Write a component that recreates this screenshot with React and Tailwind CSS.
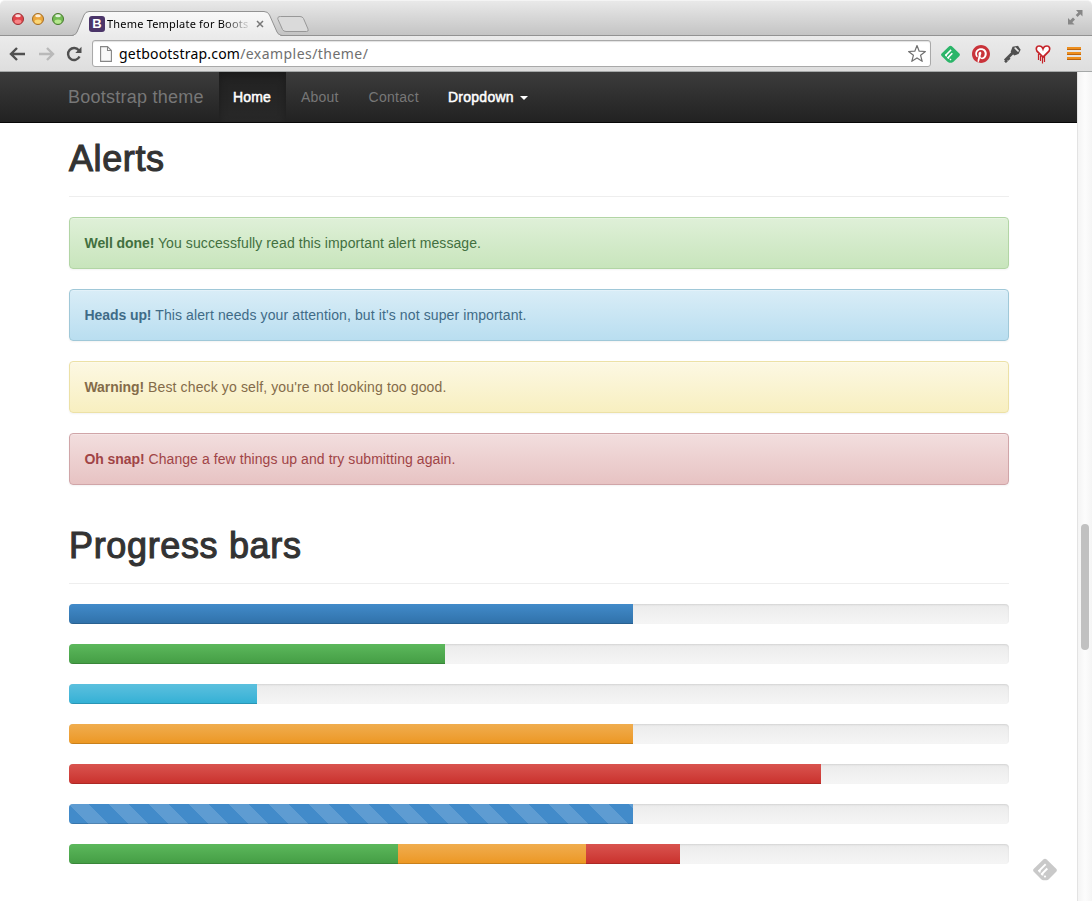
import React from "react";

const alerts = [
  { lead: "Well done!", text: "You successfully read this important alert message.", box: "from-[#dff0d8] to-[#c8e5bc] border-[#b2d5a5] text-[#42703f]", track: "tracking-[0.09px]" },
  { lead: "Heads up!", text: "This alert needs your attention, but it's not super important.", box: "from-[#d9edf7] to-[#b9def0] border-[#a0c8d8] text-[#3f6b87]", track: "tracking-[0.11px]" },
  { lead: "Warning!", text: "Best check yo self, you're not looking too good.", box: "from-[#fcf8e3] to-[#f8efc0] border-[#ece1a6] text-[#846b49]", track: "tracking-[0.13px]" },
  { lead: "Oh snap!", text: "Change a few things up and try submitting again.", box: "from-[#f2dede] to-[#e7c3c3] border-[#d0a5a8] text-[#a04446]", track: "tracking-[0.07px]" },
];

const blue = "bg-linear-to-b from-[#428bca] to-[#3071a9]";
const green = "bg-linear-to-b from-[#5cb85c] to-[#449d44]";
const cyan = "bg-linear-to-b from-[#5bc0de] to-[#31b0d5]";
const orange = "bg-linear-to-b from-[#f0ad4e] to-[#ec971f]";
const red = "bg-linear-to-b from-[#d9534f] to-[#c9302c]";
const striped =
  "bg-[#428bca] bg-[linear-gradient(45deg,rgba(255,255,255,.15)_25%,transparent_25%,transparent_50%,rgba(255,255,255,.15)_50%,rgba(255,255,255,.15)_75%,transparent_75%,transparent)] bg-[length:40px_40px]";

const bars = [
  [[60, blue]],
  [[40, green]],
  [[20, cyan]],
  [[60, orange]],
  [[80, red]],
  [[60, striped]],
  [[35, green], [20, orange], [10, red]],
];

function Light({ main, dark, glow }) {
  return (
    <svg width="12" height="12" viewBox="0 0 12 12">
      <circle cx="6" cy="6" r="5.5" fill={main} stroke={dark} strokeWidth="1" />
      <ellipse cx="6" cy="8.6" rx="3.4" ry="2.2" fill={glow} opacity=".75" />
      <ellipse cx="6" cy="2.8" rx="2.8" ry="1.5" fill="#fff" opacity=".8" />
    </svg>
  );
}

function Feedly({ size, color }) {
  return (
    <svg width={size} height={size} viewBox="0 0 24 24">
      <path d="M10.300 1.600Q12 0 13.700 1.600L23.200 10.800Q24.600 12.300 23.200 13.800L15.800 21.300Q14.800 22.300 13.500 22.300H10.500Q9.200 22.300 8.200 21.300L.8 13.800Q-.6 12.300 .8 10.800Z" fill={color} />
      <path d="M6.200 12.700 12 6.900M8.900 15.900 13.600 11.200" stroke="#fff" strokeWidth="2" strokeLinecap="square" />
      <path d="M5 12h2.600v2.400H6.200zM8 15.200h2.400v2.200H8.900zM10.800 18.300 12 17.200 13.200 18.300 12.600 19.400H11.400z" fill="#fff" />
    </svg>
  );
}

function TitleBar() {
  return (
    <div className="relative flex h-[36px] items-start rounded-t-[5px] border-t border-b border-t-[#f4f4f4] border-b-[#929292] bg-linear-to-b from-[#e9e9e9] to-[#c4c4c4]">
      <div className="flex gap-2 pl-3 pt-3">
        <Light main="#e0454b" dark="#9c3236" glow="#ff9a9a" />
        <Light main="#eba63c" dark="#a36d24" glow="#ffe58a" />
        <Light main="#74bb55" dark="#48792f" glow="#ccf5a0" />
      </div>
      <svg className="absolute left-0 top-0" width="320" height="35" viewBox="0 1 320 35">
        <defs>
          <linearGradient id="tab" x1="0" y1="0" x2="0" y2="1">
            <stop offset="0" stopColor="#f8f8f8" />
            <stop offset="1" stopColor="#ebebeb" />
          </linearGradient>
        </defs>
        <path d="M72 36Q75.500 35.500 77 32L84 15Q85.500 11.500 89 11.500H264Q268 11.500 269.500 15L277 32Q278.500 35.500 282 36Z" fill="url(#tab)" />
        <path d="M72 35.500Q75.500 35.500 77 32L84 15Q85.500 11.500 89 11.500H264Q268 11.500 269.500 15L277 32Q278.500 35.500 282 35.500" fill="none" stroke="#929292" />
        <path d="M280.500 16.500H300Q302.500 16.500 303.500 18.500L308 29Q309 31.500 306.500 31.500H286Q283.500 31.500 282.500 29.500L278 19.500Q277 16.500 280.500 16.500Z" fill="#dadada" stroke="#989898" />
      </svg>
      <div className="relative ml-[25px] mt-[15px] flex h-4 items-center">
        <span className="flex size-4 items-center justify-center rounded-[3px] bg-[#4b3569] font-['Liberation_Sans',sans-serif] text-[13px] font-bold leading-4 text-white">B</span>
        <span className="ml-[2px] w-[145px] whitespace-nowrap font-['Noto_Sans',sans-serif] text-[11px] leading-4 tracking-[0.2px] text-black mask-[linear-gradient(to_right,black_115px,transparent_145px)]">Theme Template for Boots</span>
        <svg className="ml-[4px]" width="8" height="8" viewBox="0 0 8 8">
          <path d="M1 1 7 7M7 1 1 7" stroke="#777" strokeWidth="1.500" />
        </svg>
      </div>
      <svg className="absolute right-[9px] top-[9px]" width="15" height="15" viewBox="0 0 15 15" fill="#878787">
        <path d="M8 0h6.500v6.500L12.300 4.300 9.600 7 7.700 5.100 10.300 2.400zM0 14.500V8l2.200 2.200L5 7.500l2 2-2.700 2.700L6.500 14.500z" />
      </svg>
    </div>
  );
}

function Toolbar() {
  return (
    <div className="relative flex h-[36px] items-center border-b border-[#a5a8a8] bg-linear-to-b from-[#ebebeb] to-[#dedede]">
      <div className="absolute left-[74px] top-[-1px] h-px w-[206px] bg-[#ebebeb]" />
      <svg className="ml-[9px]" width="17" height="16" viewBox="0 0 17 16" fill="none" stroke="#505050" strokeWidth="2.400">
        <path d="M8 2 2 8l6 6M2.500 8H16" />
      </svg>
      <svg className="ml-[12px]" width="17" height="16" viewBox="0 0 17 16" fill="none" stroke="#b9b9b9" strokeWidth="2.400">
        <path d="M9 2l6 6-6 6M14.500 8H1" />
      </svg>
      <svg className="ml-[11px]" width="16" height="16" viewBox="0 0 16 16">
        <path d="M12.800 4.300A6 6 0 1 0 13.500 10.600" fill="none" stroke="#505050" strokeWidth="2.400" />
        <path d="M15.500 .8V7H9.300z" fill="#505050" />
      </svg>
      <div className="ml-[10px] flex h-[27px] w-[839px] items-center rounded-[3px] border border-[#a9a9a9] bg-white shadow-[inset_0_1px_1px_rgba(0,0,0,.12)]">
        <svg className="ml-[7px]" width="12" height="16" viewBox="0 0 12 16">
          <path d="M.6 .6H7.500L11.400 4.500V15.400H.6ZM7.500 .6V4.500H11.400" fill="#f8f8f8" stroke="#858585" strokeWidth="1.100" />
        </svg>
        <span className="ml-[7px] mt-px font-['Noto_Sans',sans-serif] text-[14px] leading-5 tracking-[0.45px] text-[#6f6f6f]">
          <span className="tracking-[0.2px] text-black">getbootstrap.com</span>/examples/theme/
        </span>
        <svg className="ml-auto mr-[3px]" width="20" height="19" viewBox="0 0 20 19">
          <path d="M10 1.500 12.200 7.200 18.400 7.500 13.600 11.300 15.200 17.300 10 13.900 4.800 17.300 6.400 11.300 1.600 7.500 7.800 7.200Z" fill="#fff" stroke="#707070" strokeWidth="1.200" strokeLinejoin="round" />
        </svg>
      </div>
      <div className="ml-[10px] flex pt-[1px]"><Feedly size={19} color="#2bb569" /></div>
      <svg className="ml-[12px]" width="18" height="18" viewBox="0 0 24 24">
        <circle cx="12" cy="12" r="11.500" fill="#fff" />
        <path fill="#c9333a" d="M12 0C5.373 0 0 5.372 0 12c0 5.084 3.163 9.426 7.627 11.174-.105-.949-.2-2.405.042-3.441.218-.937 1.407-5.965 1.407-5.965s-.359-.719-.359-1.782c0-1.668.967-2.914 2.171-2.914 1.023 0 1.518.769 1.518 1.690 0 1.029-.655 2.568-.994 3.995-.283 1.194.599 2.169 1.777 2.169 2.133 0 3.772-2.249 3.772-5.495 0-2.873-2.064-4.882-5.012-4.882-3.414 0-5.418 2.561-5.418 5.207 0 1.031.397 2.138.893 2.738a.36.36 0 0 1 .083.345l-.333 1.360c-.053.220-.174.267-.402.161-1.499-.698-2.436-2.889-2.436-4.649 0-3.785 2.750-7.262 7.929-7.262 4.163 0 7.398 2.967 7.398 6.931 0 4.136-2.607 7.464-6.227 7.464-1.216 0-2.359-.631-2.750-1.378l-.748 2.853c-.271 1.043-1.002 2.350-1.492 3.146C9.570 23.812 10.763 24 12 24c6.627 0 12-5.373 12-12S18.627 0 12 0z" />
      </svg>
      <svg className="ml-[13px]" width="18" height="18" viewBox="0 0 18 18">
        <path d="M10 7.500 2 15.500M4.800 13 6.400 14.800M2.200 15.200 4 17" stroke="#505050" strokeWidth="3" />
        <path d="M9.500 1.800 15 .8 17.600 4.800 15.500 9 11.200 10.400 7.700 6.800Z" fill="#505050" />
        <path d="M12.300 3.200 15 5.900" stroke="#e5e5e5" strokeWidth="1.800" strokeLinecap="round" />
      </svg>
      <svg className="ml-[13px]" width="18" height="20" viewBox="0 0 18 20">
        <path d="M4.500 10v6M6.500 12v5M8.500 13v6.500M10.500 12v6" stroke="#c52329" strokeWidth="1.200" />
        <path d="M9 13.200 3 7.200C1.300 4.500 2.700 2 5 2 7 2 8.500 3.300 9 4.800 9.500 3.300 11 2 13 2 15.300 2 16.700 4.500 15 7.200Z" fill="#fff" stroke="#c52329" strokeWidth="1.700" />
      </svg>
      <div className="ml-[15px] flex flex-col gap-[2px]">
        <div className="h-[3px] w-[14px] border-b border-[#b96412] bg-[#ee8f1e]" />
        <div className="h-[3px] w-[14px] border-b border-[#b96412] bg-[#ee8f1e]" />
        <div className="h-[3px] w-[14px] border-b border-[#b96412] bg-[#ee8f1e]" />
      </div>
    </div>
  );
}

function Heading({ children, className }) {
  return (
    <h1 className={`border-b border-[#eee] text-[36px] leading-[40px] text-[#333] [-webkit-text-stroke:1.1px_#333] ${className}`}>{children}</h1>
  );
}

function Navbar() {
  return (
    <nav className="flex h-[51px] items-stretch border-b border-[#080808] bg-linear-to-b from-[#3c3c3c] to-[#222] pl-[68px] text-[14px] leading-[50px] text-[#777]">
      <span className="w-[151px] text-[18px] tracking-[0.25px]">Bootstrap theme</span>
      <span className="w-[67px] bg-linear-to-b from-[#222] to-[#282828] pr-px text-center tracking-[0.15px] text-white shadow-[inset_0_3px_9px_rgba(0,0,0,.25)] [-webkit-text-stroke:0.5px_#fff]">Home</span>
      <span className="w-[67px] pl-[15px] tracking-[0.2px]">About</span>
      <span className="w-[80px] pl-[15.5px] tracking-[0.3px]">Contact</span>
      <span className="flex items-center pl-[15px] tracking-[0.25px] text-white [-webkit-text-stroke:0.5px_#fff]">
        Dropdown
        <span className="ml-[6px] mt-[2px] border-x-4 border-t-4 border-x-transparent border-t-white" />
      </span>
    </nav>
  );
}

export default function App() {
  return (
    <div className="flex h-[901px] w-[1092px] flex-col overflow-hidden bg-white font-['Liberation_Sans',Arial,sans-serif]">
      <TitleBar />
      <Toolbar />
      <div className="flex min-h-0 flex-1">
        <main className="relative w-[1077px]">
          <Navbar />
          <div className="ml-[69px] w-[940px] pt-[16px]">
            <Heading className="h-[58px] tracking-[0.6px]">Alerts</Heading>
            <div className="mt-[20px] flex flex-col gap-5">
              {alerts.map((a) => (
                <div key={a.lead} className={`h-[52px] rounded-[4px] border bg-linear-to-b px-[14.5px] py-[15px] text-[14px] leading-[20px] shadow-[inset_0_1px_0_rgba(255,255,255,.25),0_1px_2px_rgba(0,0,0,.05)] ${a.box} ${a.track}`}>
                  <strong className="tracking-[-0.08px]">{a.lead}</strong> {a.text}
                </div>
              ))}
            </div>
            <Heading className="mt-[41px] h-[58px] tracking-[0.65px]">Progress bars</Heading>
            <div className="mt-[20px] flex flex-col gap-5">
              {bars.map((segments, i) => (
                <div key={i} className="flex h-5 overflow-hidden rounded-[4px] bg-linear-to-b from-[#ebebeb] to-[#f5f5f5] shadow-[inset_0_1px_2px_rgba(0,0,0,.1)]">
                  {segments.map(([width, fill], j) => (
                    <div key={j} className={`h-full shadow-[inset_0_-1px_0_rgba(0,0,0,.15)] ${fill}`} style={{ width: `${width}%` }} />
                  ))}
                </div>
              ))}
            </div>
          </div>
          <div className="absolute left-[1033px] top-[786px]"><Feedly size={24} color="#c9c9c9" /></div>
        </main>
        <div className="w-[15px] border-l border-[#e3e3e3] bg-linear-to-r from-[#f4f4f4] via-[#fcfcfc] to-[#f5f5f5] pl-[3px] pt-[452px]">
          <div className="h-[126px] w-[8px] rounded-full bg-[#c1c1c1]" />
        </div>
      </div>
    </div>
  );
}
